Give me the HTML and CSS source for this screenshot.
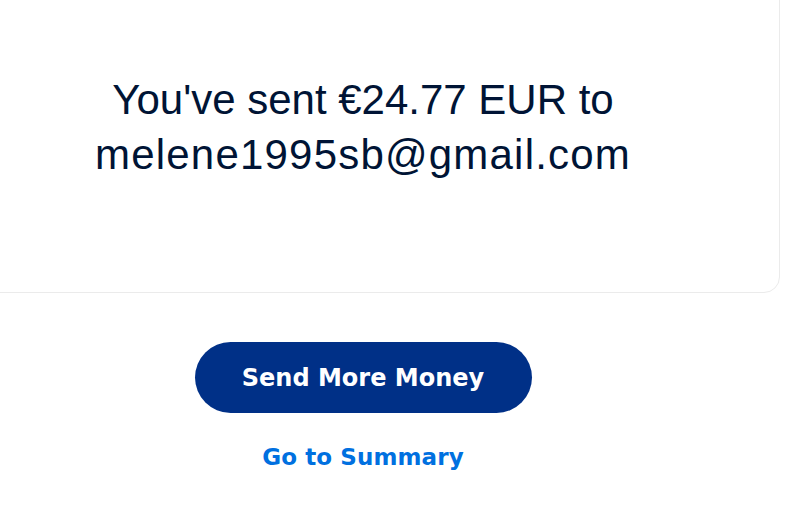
FILE: index.html
```html
<!DOCTYPE html>
<html lang="en">
<head>
<meta charset="utf-8">
<title>Payment sent</title>
<link rel="stylesheet" href="styles.css">
</head>
<body>
<main class="page">
  <section class="card">
    <h1 class="message">You've sent €24.77 EUR to<br><span class="email">melene1995sb@gmail.com</span></h1>
  </section>
  <div class="actions">
    <button class="btn-primary" type="button">Send More Money</button>
    <a class="link" href="#">Go to Summary</a>
  </div>
</main>
</body>
</html>
```
FILE: styles.css
```css
html, body {
  margin: 0;
  padding: 0;
  background: #ffffff;
}
body {
  font-family: "Liberation Sans", Arial, sans-serif;
  overflow: hidden;
}
.page {
  display: flex;
  flex-direction: column;
  width: 800px;
}
.card {
  box-sizing: border-box;
  margin: -30px 20px 0 -54px;
  height: 323px;
  border: 1px solid #ebebeb;
  border-radius: 16px;
  display: flex;
  justify-content: center;
  padding-top: 101px;
}
.message {
  margin: 0;
  font-weight: 400;
  font-size: 42px;
  line-height: 55px;
  color: #001435;
  text-align: center;
}
.email {
  letter-spacing: 1.2px;
}
.actions {
  display: flex;
  flex-direction: column;
  align-items: center;
  margin-left: -74px;
  padding-top: 49px;
}
.btn-primary {
  width: 337px;
  height: 71px;
  border: none;
  border-radius: 36px;
  background: #003087;
  color: #ffffff;
  font-family: "DejaVu Sans", "Liberation Sans", sans-serif;
  font-weight: 700;
  font-size: 24px;
  letter-spacing: 0;
  padding: 0;
}
.link {
  margin-top: 29px;
  font-family: "DejaVu Sans", "Liberation Sans", sans-serif;
  font-weight: 700;
  font-size: 23px;
  line-height: 30px;
  letter-spacing: 0.1px;
  color: #0070e0;
  text-decoration: none;
}
```
